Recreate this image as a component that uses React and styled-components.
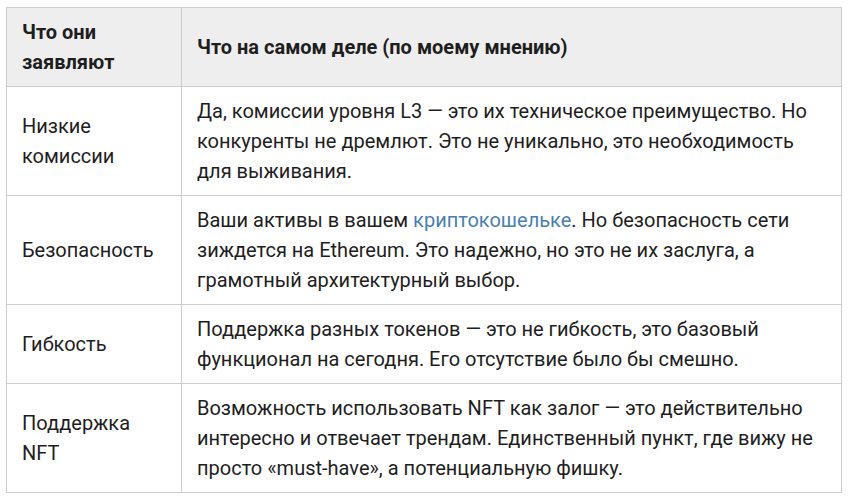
import styled, { createGlobalStyle } from "styled-components";

const GlobalStyle = createGlobalStyle`
  body {
    margin: 0;
    background: #ffffff;
    font-family: Roboto, "Noto Sans", sans-serif;
  }
`;

const Wrapper = styled.div`
  padding: 7px 6px;
`;

const Table = styled.table`
  width: 836px;
  border-collapse: collapse;
  table-layout: fixed;
  color: #1e1e1e;
  font-size: 20px;
  line-height: 30px;
`;

const HeadCell = styled.th`
  background: #eeeeee;
  border: 1px solid #cdcdcd;
  padding: 9px 15px;
  text-align: left;
  vertical-align: middle;
  font-weight: 700;
`;

const Cell = styled.td`
  border: 1px solid #cdcdcd;
  padding: 9px 15px;
  vertical-align: middle;
`;

const A = styled.a`
  color: #4a7fb3;
  text-decoration: none;
`;

const rows = [
  {
    claim: "Низкие комиссии",
    reality: (
      <>
        Да, комиссии уровня L3 — это их техническое преимущество. Но
        конкуренты не дремлют. Это не уникально, это необходимость для
        выживания.
      </>
    ),
  },
  {
    claim: "Безопасность",
    reality: (
      <>
        Ваши активы в вашем <A href="#">криптокошельке</A>. Но безопасность
        сети зиждется на Ethereum. Это надежно, но это не их заслуга, а
        грамотный архитектурный выбор.
      </>
    ),
  },
  {
    claim: "Гибкость",
    reality: (
      <>
        Поддержка разных токенов — это не гибкость, это базовый функционал на
        сегодня. Его отсутствие было бы смешно.
      </>
    ),
  },
  {
    claim: "Поддержка NFT",
    reality: (
      <>
        Возможность использовать NFT как залог — это действительно интересно и
        отвечает трендам. Единственный пункт, где вижу не просто «must-have», а
        потенциальную фишку.
      </>
    ),
  },
];

export default function App() {
  return (
    <Wrapper>
      <GlobalStyle />
      <Table>
        <colgroup>
          <col style={{ width: 175 }} />
          <col />
        </colgroup>
        <thead>
          <tr>
            <HeadCell>Что они заявляют</HeadCell>
            <HeadCell>Что на самом деле (по моему мнению)</HeadCell>
          </tr>
        </thead>
        <tbody>
          {rows.map((r) => (
            <tr key={r.claim}>
              <Cell>{r.claim}</Cell>
              <Cell>{r.reality}</Cell>
            </tr>
          ))}
        </tbody>
      </Table>
    </Wrapper>
  );
}
